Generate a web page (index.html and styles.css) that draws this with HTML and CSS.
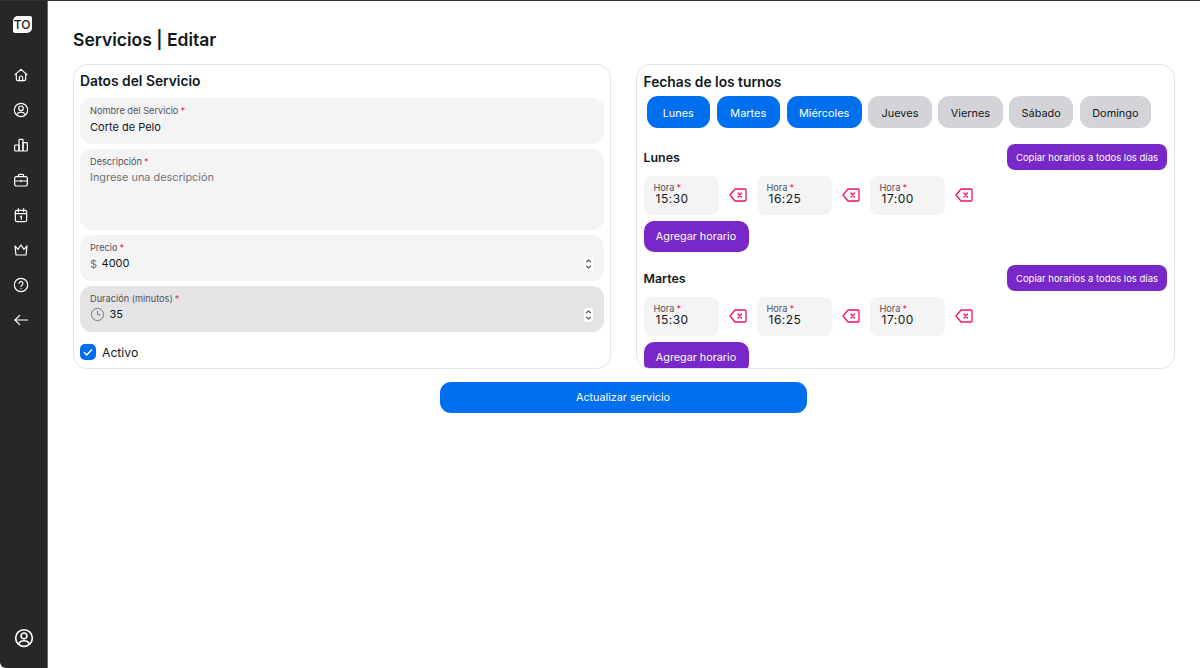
FILE: index.html
```html
<!DOCTYPE html>
<html lang="es">
<head>
    <meta charset="UTF-8">
    <meta name="viewport" content="width=device-width, initial-scale=1.0">
    <title>Servicios | Editar</title>
    <link rel="stylesheet" href="styles.css">
</head>
<body>
    <div class="app">
        <!-- Sidebar -->
        <aside class="sidebar">
            <div class="logo">TO</div>
            <nav class="nav">
                <svg class="nav-icon" viewBox="0 0 24 24"><path d="M3 11.500 12 3.500l9 8"/><path d="M5 9.800V18a2.500 2.500 0 0 0 2.500 2.500h9A2.500 2.500 0 0 0 19 18V9.800"/><path d="M9.500 20.500V16a2.500 2.500 0 0 1 5 0v4.500"/></svg>
                <svg class="nav-icon" viewBox="0 0 24 24"><circle cx="12" cy="12" r="10"/><circle cx="12" cy="9.500" r="3.500"/><path d="M6 18.500c1-2.300 3-3.300 6-3.300s5 1 6 3.300"/></svg>
                <svg class="nav-icon" viewBox="0 0 24 24"><rect x="2.500" y="12" width="6.500" height="9" rx="1"/><rect x="9" y="3.500" width="6" height="17.500" rx="1"/><rect x="15" y="8.500" width="6.500" height="12.500" rx="1"/></svg>
                <svg class="nav-icon" viewBox="0 0 24 24"><rect x="2.500" y="7" width="19" height="14" rx="2.500"/><path d="M8 7V5.500a2 2 0 0 1 2-2h4a2 2 0 0 1 2 2V7"/><path d="M2.500 13.500h19"/><path d="M12 12.500v2"/></svg>
                <svg class="nav-icon" viewBox="0 0 24 24"><rect x="3.500" y="5" width="17" height="17" rx="2.500"/><path d="M8 2.500V7M16 2.500V7M3.500 10h17"/><path d="M11 14.500l1.500-.8V18.500"/></svg>
                <svg class="nav-icon" viewBox="0 0 24 24"><path d="M3 6l4.500 5L12 4.500 16.500 11 21 6l-1.500 13.500h-15z"/></svg>
                <svg class="nav-icon" viewBox="0 0 24 24"><circle cx="12" cy="12" r="10"/><path d="M9.200 9.500a2.800 2.800 0 1 1 4.300 2.400c-1 .6-1.500 1.200-1.500 2.300"/><path d="M12 17.300v.2"/></svg>
                <svg class="nav-icon" viewBox="0 0 24 24"><path d="M22 12H3"/><path d="M10 5l-7 7 7 7"/></svg>
            </nav>
            <svg class="nav-icon" viewBox="0 0 24 24"><circle cx="12" cy="12" r="10"/><circle cx="12" cy="9.500" r="3.500"/><path d="M6 18.500c1-2.300 3-3.300 6-3.300s5 1 6 3.300"/></svg>
        </aside>

        <main class="content">
            <h1 class="page-title">Servicios | Editar</h1>

            <div class="columns">
                <!-- Datos del servicio -->
                <section class="card card-left">
                    <h2 class="card-title">Datos del Servicio</h2>
                    <div class="field field-text">
                        <span class="label">Nombre del Servicio<i>*</i></span>
                        <span class="value">Corte de Pelo</span>
                    </div>
                    <div class="field field-area">
                        <span class="label">Descripción<i>*</i></span>
                        <span class="placeholder">Ingrese una descripción</span>
                    </div>
                    <div class="field field-number">
                        <span class="label">Precio<i>*</i></span>
                        <div class="value-row">
                            <span class="prefix">$</span>
                            <span class="value">4000</span>
                            <svg class="spinner" viewBox="0 0 10 14"><path d="M2.500 5 5 2.500 7.500 5M2.500 9 5 11.500 7.500 9"/></svg>
                        </div>
                    </div>
                    <div class="field field-number field-hover">
                        <span class="label">Duración (minutos)<i>*</i></span>
                        <div class="value-row">
                            <svg class="clock" viewBox="0 0 16 16"><circle cx="8" cy="8" r="6.500"/><path d="M8 4v4.300h3.200"/></svg>
                            <span class="value">35</span>
                            <svg class="spinner" viewBox="0 0 10 14"><path d="M2.500 5 5 2.500 7.500 5M2.500 9 5 11.500 7.500 9"/></svg>
                        </div>
                    </div>
                    <div class="check-row">
                        <span class="checkbox"><svg viewBox="0 0 16 16"><path d="M4 8.300l2.700 2.700L12 5.500"/></svg></span>
                        <span>Activo</span>
                    </div>
                </section>

                <!-- Fechas de los turnos -->
                <section class="card card-right">
                    <h2 class="card-title">Fechas de los turnos</h2>
                    <div class="days">
                        <button class="day day-on">Lunes</button>
                        <button class="day day-on">Martes</button>
                        <button class="day day-on">Miércoles</button>
                        <button class="day">Jueves</button>
                        <button class="day">Viernes</button>
                        <button class="day">Sábado</button>
                        <button class="day">Domingo</button>
                    </div>

                    <div class="day-block">
                        <div class="day-head">
                            <h3>Lunes</h3>
                            <button class="copy-btn">Copiar horarios a todos los días</button>
                        </div>
                        <div class="slots">
                            <div class="slot"><div class="time"><span class="label">Hora<i>*</i></span><span class="time-value">15:30</span></div><svg class="remove" viewBox="0 0 18 14"><path d="M6 1h10a1 1 0 0 1 1 1v10a1 1 0 0 1-1 1H6L1 7z"/><path d="M9 5l3.500 4M12.500 5 9 9"/></svg></div>
                            <div class="slot"><div class="time"><span class="label">Hora<i>*</i></span><span class="time-value">16:25</span></div><svg class="remove" viewBox="0 0 18 14"><path d="M6 1h10a1 1 0 0 1 1 1v10a1 1 0 0 1-1 1H6L1 7z"/><path d="M9 5l3.500 4M12.500 5 9 9"/></svg></div>
                            <div class="slot"><div class="time"><span class="label">Hora<i>*</i></span><span class="time-value">17:00</span></div><svg class="remove" viewBox="0 0 18 14"><path d="M6 1h10a1 1 0 0 1 1 1v10a1 1 0 0 1-1 1H6L1 7z"/><path d="M9 5l3.500 4M12.500 5 9 9"/></svg></div>
                        </div>
                        <button class="add-btn">Agregar horario</button>
                    </div>

                    <div class="day-block">
                        <div class="day-head">
                            <h3>Martes</h3>
                            <button class="copy-btn">Copiar horarios a todos los días</button>
                        </div>
                        <div class="slots">
                            <div class="slot"><div class="time"><span class="label">Hora<i>*</i></span><span class="time-value">15:30</span></div><svg class="remove" viewBox="0 0 18 14"><path d="M6 1h10a1 1 0 0 1 1 1v10a1 1 0 0 1-1 1H6L1 7z"/><path d="M9 5l3.500 4M12.500 5 9 9"/></svg></div>
                            <div class="slot"><div class="time"><span class="label">Hora<i>*</i></span><span class="time-value">16:25</span></div><svg class="remove" viewBox="0 0 18 14"><path d="M6 1h10a1 1 0 0 1 1 1v10a1 1 0 0 1-1 1H6L1 7z"/><path d="M9 5l3.500 4M12.500 5 9 9"/></svg></div>
                            <div class="slot"><div class="time"><span class="label">Hora<i>*</i></span><span class="time-value">17:00</span></div><svg class="remove" viewBox="0 0 18 14"><path d="M6 1h10a1 1 0 0 1 1 1v10a1 1 0 0 1-1 1H6L1 7z"/><path d="M9 5l3.500 4M12.500 5 9 9"/></svg></div>
                        </div>
                        <button class="add-btn">Agregar horario</button>
                    </div>
                </section>
            </div>

            <div class="actions">
                <button class="submit-btn">Actualizar servicio</button>
            </div>
        </main>
    </div>
</body>
</html>
```

FILE: styles.css
```css
* {
    box-sizing: border-box;
}
body {
    margin: 0;
    font-family: Inter, "Noto Sans", sans-serif;
    color: #11181c;
    background-color: #fff;
    overflow: hidden;
}
button {
    font-family: inherit;
    border: none;
    cursor: pointer;
}
.app {
    display: flex;
    height: 668px;
    border-top: 1px solid #333;
}
.sidebar {
    width: 48px;
    flex-shrink: 0;
    background-color: #27272a;
    border-right: 1px solid #6b6b6b;
    border-radius: 0 0 0 6px;
    display: flex;
    flex-direction: column;
    align-items: center;
    padding: 15px 0 20px;
}
.logo {
    width: 19px;
    height: 17px;
    margin-right: 3px;
    background-color: #fff;
    color: #18181b;
    border-radius: 5px 2px 5px 2px;
    font-size: 12px;
    font-weight: 500;
    line-height: 17px;
    text-align: center;
}
.nav {
    display: flex;
    flex-direction: column;
    align-items: center;
    gap: 19px;
    margin-top: 34px;
    margin-right: 6px;
    flex: 1;
}
.nav-icon {
    width: 16px;
    height: 16px;
    fill: none;
    stroke: #fff;
    stroke-width: 1.800;
    stroke-linecap: round;
    stroke-linejoin: round;
}
.sidebar > .nav-icon {
    width: 20px;
    height: 20px;
    stroke-width: 1.900;
}
.content {
    flex: 1;
    padding: 27px 25px 0;
    min-width: 0;
}
.page-title {
    margin: 0 0 13px;
    font-size: 17.500px;
    line-height: 23px;
    font-weight: 600;
}
.columns {
    display: flex;
    gap: 25px;
}
.card {
    flex: 1;
    height: 305px;
    overflow: hidden;
    border: 1px solid #e4e4e7;
    border-radius: 14px;
    padding: 6px;
}
.card-title {
    margin: 0;
    font-size: 13.800px;
    line-height: 20px;
    font-weight: 600;
}
.card-left {
    display: flex;
    flex-direction: column;
    gap: 5px;
}
.card-left .card-title {
    margin-bottom: 2px;
}
.field {
    background-color: #f4f4f5;
    border-radius: 12px;
    padding: 6px 10px;
    display: flex;
    flex-direction: column;
    flex-shrink: 0;
}
.field-text,
.field-number {
    height: 46px;
}
.field-area {
    height: 81px;
}
.field-hover {
    background-color: #e4e4e7;
}
.field-text .value {
    margin-top: 1px;
}
.label {
    font-size: 9.200px;
    line-height: 13px;
    color: #52525b;
}
.label i {
    color: #f31260;
    font-style: normal;
    margin-left: 2px;
}
.value {
    font-size: 11px;
    line-height: 19px;
    color: #11181c;
}
.placeholder {
    font-size: 10.900px;
    line-height: 19px;
    color: #71717a;
}
.value-row {
    display: flex;
    align-items: center;
    gap: 4.500px;
    height: 19px;
}
.prefix {
    font-size: 11px;
    color: #71717a;
}
.clock {
    width: 15px;
    height: 15px;
    fill: none;
    stroke: #71717a;
    stroke-width: 1;
}
.spinner {
    width: 9px;
    height: 14px;
    margin-left: auto;
    margin-right: 1px;
    background-color: #fff;
    border-radius: 3px;
    fill: none;
    stroke: #3f3f46;
    stroke-width: 1.200;
}
.check-row {
    display: flex;
    align-items: center;
    gap: 6px;
    margin-top: 7px;
    font-size: 12.200px;
}
.checkbox {
    width: 16px;
    height: 16px;
    border-radius: 5px;
    background-color: #006fee;
    display: flex;
}
.checkbox svg {
    fill: none;
    stroke: #fff;
    stroke-width: 1.500;
}
.card-right {
    padding: 7px;
}
.days {
    display: flex;
    gap: 6.500px;
    padding: 4px 3px 0;
}
.day {
    height: 32px;
    padding: 1px 12.500px 0;
    min-width: 63.500px;
    border-radius: 11px;
    background-color: #d4d4d8;
    color: #11181c;
    font-size: 10.900px;
}
.day-on {
    background-color: #006fee;
    color: #fff;
}
.days + .day-block {
    margin-top: 16px;
}
.day-block {
    margin-top: 13px;
}
.day-head {
    display: flex;
    justify-content: space-between;
    align-items: center;
    height: 26px;
    margin-bottom: 6px;
}
.day-head h3 {
    margin: 0;
    font-size: 12.400px;
    font-weight: 600;
}
.copy-btn {
    height: 26px;
    width: 160px;
    padding: 0;
    white-space: nowrap;
    border-radius: 8px;
    background-color: #7828c8;
    color: #fff;
    font-size: 9.500px;
}
.slots {
    display: flex;
    gap: 9.500px;
}
.slot {
    display: flex;
    align-items: center;
    gap: 10px;
}
.time {
    width: 75.500px;
    height: 39px;
    background-color: #f4f4f5;
    border-radius: 8px;
    padding: 6px 10px;
    display: flex;
    flex-direction: column;
}
.time .label {
    line-height: 11px;
}
.time-value {
    font-size: 12px;
    line-height: 12px;
    margin-left: 2px;
    letter-spacing: 0.500px;
}
.remove {
    width: 18px;
    height: 14px;
    margin-bottom: 2px;
    fill: none;
    stroke: #f31260;
    stroke-width: 1.300;
    stroke-linejoin: round;
    stroke-linecap: round;
}
.add-btn {
    display: block;
    height: 31px;
    width: 105px;
    margin-top: 6px;
    padding: 0;
    border-radius: 10px;
    background-color: #7828c8;
    color: #fff;
    font-size: 10.800px;
}
.actions {
    display: flex;
    justify-content: center;
    margin-top: 13px;
    padding-right: 2px;
}
.submit-btn {
    width: 367px;
    height: 31px;
    border-radius: 11px;
    background-color: #006fee;
    color: #fff;
    font-size: 10.800px;
}
```
